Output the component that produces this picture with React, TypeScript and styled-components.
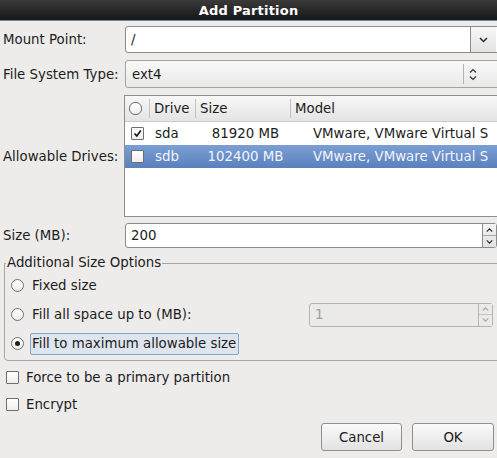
import * as React from 'react';
import styled, { createGlobalStyle } from 'styled-components';

const GlobalStyle = createGlobalStyle`
  html, body {
    margin: 0;
    padding: 0;
    background: #edeceb;
  }
  body {
    font-family: "DejaVu Sans", "Liberation Sans", sans-serif;
    font-size: 13.33px;
    color: #1c1c1c;
  }
`;

const Window = styled.div`
  width: 497px;
  height: 458px;
  overflow: hidden;
  background: #edeceb;
`;

const TitleBar = styled.div`
  height: 20px;
  display: flex;
  align-items: center;
  justify-content: center;
  background: linear-gradient(#3a3a3a, #161616);
  border-bottom: 1px solid #6f84a6;
  color: #ffffff;
  font-weight: bold;
  font-size: 13px;
  letter-spacing: 0.2px;
`;

const Body = styled.div`
  width: 510px;
  padding-top: 5px;
`;

const FieldRow = styled.div<{ $top?: number; $height: number }>`
  display: flex;
  align-items: center;
  margin-top: ${(p) => p.$top ?? 0}px;
  height: ${(p) => p.$height}px;
`;

const Label = styled.div`
  width: 122px;
  padding-left: 3px;
  flex-shrink: 0;
  white-space: nowrap;
`;

const Combo = styled.div`
  flex: 1;
  height: 100%;
  display: flex;
  box-sizing: border-box;
  border: 1px solid #8c8c8c;
  border-radius: 3px 0 0 3px;
  background: #ffffff;
`;

const ComboText = styled.div`
  flex: 1;
  display: flex;
  align-items: center;
  padding-left: 5px;
`;

const ComboButton = styled.div`
  width: 25px;
  display: flex;
  align-items: center;
  justify-content: center;
  border-left: 1px solid #8c8c8c;
  background: linear-gradient(#f7f7f7, #e3e3e3);
  margin-right: 13px;
`;

const Select = styled.div`
  flex: 1;
  height: 100%;
  box-sizing: border-box;
  display: flex;
  align-items: center;
  border: 1px solid #a3a3a3;
  border-radius: 3px;
  background: linear-gradient(#f9f9f9, #e9e9e8);
  padding-left: 6px;
`;

const SelectText = styled.div`
  flex: 1;
`;

const SelectArrows = styled.div`
  width: 18px;
  height: 20px;
  display: flex;
  align-items: center;
  justify-content: center;
  border-left: 1px solid #b3b3b3;
  margin-right: 27px;
`;

const Tree = styled.div`
  flex: 1;
  height: 100%;
  box-sizing: border-box;
  border: 1px solid #8e8e8e;
  background: #ffffff;
  margin-left: -1px;
`;

const TreeHeader = styled.div`
  display: grid;
  grid-template-columns: 24px 46px 95px 1fr;
  height: 25px;
  background: linear-gradient(#f7f7f7, #e4e4e4);
  border-bottom: 1px solid #c9c9c9;
`;

const HeadCell = styled.div<{ $sep?: boolean }>`
  display: flex;
  align-items: center;
  padding-left: 4px;
  border-left: ${(p) => (p.$sep ? '1px solid #c2c2c2' : 'none')};
  margin: ${(p) => (p.$sep ? '3px 0' : '0')};
`;

const TreeRow = styled.div<{ $selected?: boolean }>`
  display: grid;
  grid-template-columns: 24px 46px 95px 1fr;
  height: 23px;
  align-items: center;
  background: ${(p) => (p.$selected ? 'linear-gradient(#7b9fd4, #5a80bd)' : '#ffffff')};
  color: ${(p) => (p.$selected ? '#f2f5fb' : '#1c1c1c')};
  white-space: nowrap;
`;

const Cell = styled.div<{ $align?: string; $pad?: number }>`
  text-align: ${(p) => p.$align ?? 'left'};
  padding-left: ${(p) => p.$pad ?? 0}px;
`;

const CellBox = styled.div`
  display: flex;
  justify-content: center;
`;

const Check = styled.div<{ $round?: boolean }>`
  width: 11px;
  height: 11px;
  border: 1px solid #6e6e6e;
  border-radius: ${(p) => (p.$round ? '6px' : '1px')};
  background: linear-gradient(#ffffff, #eeeeee);
  display: flex;
  align-items: center;
  justify-content: center;
  flex-shrink: 0;
`;

const SpinEntry = styled.div<{ $disabled?: boolean }>`
  flex: 1;
  height: 100%;
  box-sizing: border-box;
  display: flex;
  border: 1px solid ${(p) => (p.$disabled ? '#b4b4b4' : '#8c8c8c')};
  border-radius: 3px;
  background: ${(p) => (p.$disabled ? '#ebeae9' : '#ffffff')};
  color: ${(p) => (p.$disabled ? '#a0a0a0' : '#1c1c1c')};
`;

const SpinText = styled.div`
  flex: 1;
  display: flex;
  align-items: center;
  padding-left: 5px;
`;

const SpinButtons = styled.div<{ $disabled?: boolean }>`
  width: 13px;
  display: flex;
  flex-direction: column;
  border-left: 1px solid ${(p) => (p.$disabled ? '#b4b4b4' : '#8c8c8c')};
  background: ${(p) => (p.$disabled ? '#ebeae9' : 'linear-gradient(#f4f4f4, #e2e2e2)')};
`;

const SpinHalf = styled.div<{ $top?: boolean; $disabled?: boolean }>`
  flex: 1;
  display: flex;
  align-items: center;
  justify-content: center;
  border-bottom: ${(p) => (p.$top ? `1px solid ${p.$disabled ? '#c4c4c4' : '#a9a9a9'}` : 'none')};
`;

const SpinSpacer = styled.div`
  width: 13px;
`;

const Frame = styled.fieldset`
  margin: 7px 0 0 4px;
  padding: 0 0 2px 0;
  border: 1px solid #a6a6a6;
  border-radius: 0 0 0 4px;
  min-width: 0;
`;

const Legend = styled.legend`
  margin-left: 1px;
  padding: 0 1px;
  line-height: 16px;
`;

const OptionRow = styled.div`
  display: flex;
  align-items: center;
  height: 29px;
  padding-left: 6px;
`;

const Radio = styled.div<{ $on?: boolean }>`
  width: 11px;
  height: 11px;
  border: 1px solid #737373;
  border-radius: 50%;
  background: linear-gradient(#ffffff, #ececec);
  display: flex;
  align-items: center;
  justify-content: center;
  flex-shrink: 0;
  &::after {
    content: '';
    display: ${(p) => (p.$on ? 'block' : 'none')};
    width: 5px;
    height: 5px;
    border-radius: 50%;
    background: #1e1e1e;
  }
`;

const OptionLabel = styled.div<{ $focus?: boolean }>`
  margin-left: 6px;
  padding: 2px 2px 3px 1px;
  border: 1px solid ${(p) => (p.$focus ? '#88a7cf' : 'transparent')};
  border-radius: 2px;
  background: ${(p) => (p.$focus ? '#dee5ee' : 'transparent')};
  white-space: nowrap;
`;

const OptionSpin = styled.div`
  margin-left: auto;
  width: 184px;
  height: 24px;
  display: flex;
  margin-right: 16px;
`;

const CheckRow = styled.div<{ $top?: number }>`
  display: flex;
  align-items: center;
  height: 27px;
  padding-left: 6px;
  margin-top: ${(p) => p.$top ?? 0}px;
  gap: 7px;
`;

const Buttons = styled.div`
  display: flex;
  justify-content: flex-end;
  gap: 10px;
  width: 494px;
  margin-top: 5px;
`;

const Button = styled.div<{ $width: number }>`
  width: ${(p) => p.$width}px;
  height: 28px;
  box-sizing: border-box;
  display: flex;
  align-items: center;
  justify-content: center;
  border: 1px solid #8f8f8f;
  border-radius: 3px;
  background: linear-gradient(#fafafa, #e2e2e2);
`;

const Chevron = ({ up, color = '#2a2a2a', w = 9 }: { up?: boolean; color?: string; w?: number }) => (
  <svg width={w} height={6} viewBox="0 0 9 6">
    <path d={up ? 'M1 5 L4.5 1.5 L8 5' : 'M1 1 L4.5 4.5 L8 1'} fill="none" stroke={color} strokeWidth={1.5} />
  </svg>
);

const UpDown = () => (
  <svg width={8} height={13} viewBox="0 0 8 13">
    <path d="M1 4.5 L4 1.5 L7 4.5" fill="none" stroke="#333" strokeWidth={1.2} />
    <path d="M1 8.5 L4 11.5 L7 8.5" fill="none" stroke="#333" strokeWidth={1.2} />
  </svg>
);

const Tick = () => (
  <svg width={9} height={9} viewBox="0 0 9 9">
    <path d="M1.5 4.5 L3.8 7 L7.8 1.5" fill="none" stroke="#111" strokeWidth={1.6} />
  </svg>
);

const drives = [
  { name: 'sda', size: '81920 MB', model: 'VMware, VMware Virtual S', checked: true, selected: false },
  { name: 'sdb', size: '102400 MB', model: 'VMware, VMware Virtual S', checked: false, selected: true },
];

const Spin = ({ value, disabled }: { value: string; disabled?: boolean }) => (
  <SpinEntry $disabled={disabled}>
    <SpinText>{value}</SpinText>
    <SpinButtons $disabled={disabled}>
      <SpinHalf $top $disabled={disabled}>
        <Chevron up w={7} color={disabled ? '#a8a8a8' : '#2a2a2a'} />
      </SpinHalf>
      <SpinHalf $disabled={disabled}>
        <Chevron w={7} color={disabled ? '#a8a8a8' : '#2a2a2a'} />
      </SpinHalf>
    </SpinButtons>
  </SpinEntry>
);

const App = () => (
  <Window>
    <GlobalStyle />
    <TitleBar>Add Partition</TitleBar>
    <Body>
      <FieldRow $height={27}>
        <Label>Mount Point:</Label>
        <Combo>
          <ComboText>/</ComboText>
          <ComboButton>
            <Chevron />
          </ComboButton>
        </Combo>
      </FieldRow>
      <FieldRow $top={7} $height={28}>
        <Label>File System Type:</Label>
        <Select>
          <SelectText>ext4</SelectText>
          <SelectArrows>
            <UpDown />
          </SelectArrows>
        </Select>
      </FieldRow>
      <FieldRow $top={7} $height={122}>
        <Label>Allowable Drives:</Label>
        <Tree>
          <TreeHeader>
            <HeadCell>
              <Check $round />
            </HeadCell>
            <HeadCell $sep>Drive</HeadCell>
            <HeadCell $sep>Size</HeadCell>
            <HeadCell $sep>Model</HeadCell>
          </TreeHeader>
          {drives.map((d) => (
            <TreeRow key={d.name} $selected={d.selected}>
              <CellBox>
                <Check>{d.checked && <Tick />}</Check>
              </CellBox>
              <Cell $pad={6}>{d.name}</Cell>
              <Cell $align="center" $pad={6}>{d.size}</Cell>
              <Cell $pad={23}>{d.model}</Cell>
            </TreeRow>
          ))}
        </Tree>
      </FieldRow>
      <FieldRow $top={6} $height={25}>
        <Label>Size (MB):</Label>
        <Spin value="200" />
        <SpinSpacer />
      </FieldRow>
      <Frame>
        <Legend>Additional Size Options</Legend>
        <OptionRow>
          <Radio />
          <OptionLabel>Fixed size</OptionLabel>
        </OptionRow>
        <OptionRow>
          <Radio />
          <OptionLabel>Fill all space up to (MB):</OptionLabel>
          <OptionSpin>
            <Spin value="1" disabled />
          </OptionSpin>
        </OptionRow>
        <OptionRow>
          <Radio $on />
          <OptionLabel $focus>Fill to maximum allowable size</OptionLabel>
        </OptionRow>
      </Frame>
      <CheckRow $top={3}>
        <Check />
        Force to be a primary partition
      </CheckRow>
      <CheckRow>
        <Check />
        Encrypt
      </CheckRow>
      <Buttons>
        <Button $width={81}>Cancel</Button>
        <Button $width={82}>OK</Button>
      </Buttons>
    </Body>
  </Window>
);

export default App;
